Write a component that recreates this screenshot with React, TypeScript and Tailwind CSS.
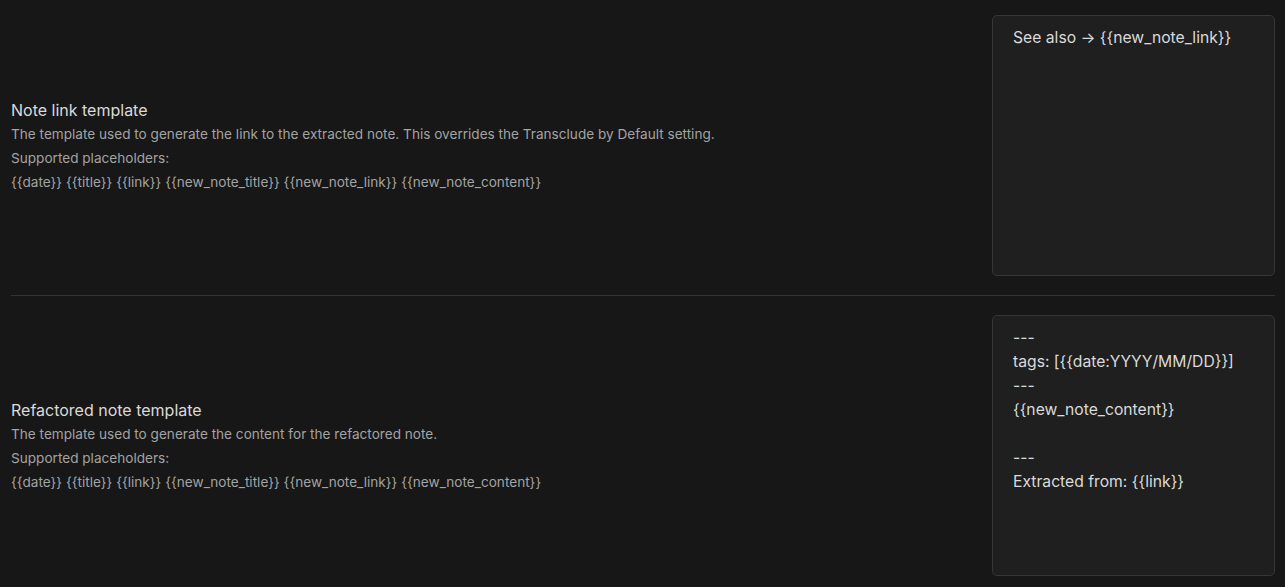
import React from 'react';

const font = { fontFamily: 'Inter, "Noto Sans", sans-serif' };

type Setting = {
    name: string;
    desc: string;
    value: string;
};

const settings: Setting[] = [
    {
        name: 'Note link template',
        desc: 'The template used to generate the link to the extracted note. This overrides the Transclude by Default setting.',
        value: 'See also → {{new_note_link}}',
    },
    {
        name: 'Refactored note template',
        desc: 'The template used to generate the content for the refactored note.',
        value: '---\ntags: [{{date:YYYY/MM/DD}}]\n---\n{{new_note_content}}\n\n---\nExtracted from: {{link}}',
    },
];

function SettingRow({ setting, first }: { setting: Setting; first: boolean }) {
    return (
        <div
            className={
                first
                    ? 'flex items-center gap-6 pt-[15px] pb-[19px]'
                    : 'flex items-center gap-6 pt-[19px] pb-[19px] border-t border-[#333333]'
            }
        >
            <div className="flex-1 min-w-0">
                <div className="text-[16px] leading-[24px] text-[#dadada]">{setting.name}</div>
                <div className="text-[13.6px] leading-[24px] text-[#a3a3a3]">
                    <div>{setting.desc}</div>
                    <div>Supported placeholders:</div>
                    <div>{'{{date}} {{title}} {{link}} {{new_note_title}} {{new_note_link}} {{new_note_content}}'}</div>
                </div>
            </div>
            <textarea
                readOnly
                spellCheck={false}
                defaultValue={setting.value}
                className="w-[283px] h-[261px] shrink-0 resize-none rounded-[5px] border border-[#363636] bg-[#1f1f1f] pl-[20px] pr-3 pt-[10px] text-[15.7px] leading-[24px] text-[#dadada] outline-none"
                style={font}
            />
        </div>
    );
}

export default function App() {
    return (
        <div className="min-h-screen bg-[#171717] pl-[11px] pr-[10px]" style={font}>
            {settings.map((s, i) => (
                <SettingRow key={s.name} setting={s} first={i === 0} />
            ))}
        </div>
    );
}
